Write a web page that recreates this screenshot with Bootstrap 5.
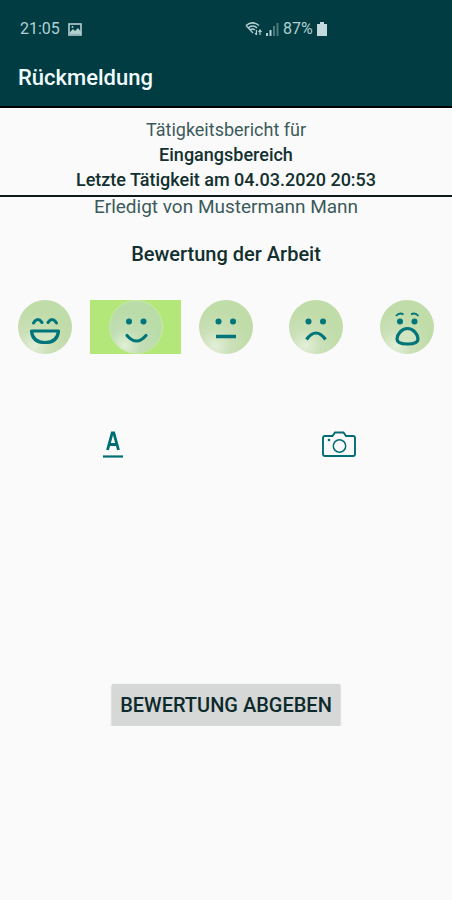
<!DOCTYPE html>
<html lang="de">
<head>
<meta charset="utf-8">
<meta name="viewport" content="width=device-width, initial-scale=1">
<title>Rückmeldung</title>
<link rel="stylesheet" href="https://cdn.jsdelivr.net/npm/bootstrap@5.3.0/dist/css/bootstrap.min.css">
<style>
body { background: #fafafa; color: #12302f; font-family: Roboto, "Liberation Sans", sans-serif; font-size: 18px; line-height: 25px; }
.app-header { background: #003c42; border-bottom: 2px solid #000; }
.status-bar { color: #b4cfd2; font-size: 16px; line-height: 24px; padding: 17px 20px 0; }
.status-bar > div { flex: 1 1 0; }
.status-right { padding-left: 38px; }
.app-title { color: #f0fbfc; font-size: 22px; line-height: 30px; font-weight: 500; padding: 22px 18px 13px; }
.report { border-bottom: 2px solid #101a1b; padding-top: 9px; padding-bottom: 3px; }
.report .intro, .done-by { color: #3c5a5b; }
.done-by { font-size: 19px; line-height: 20px; }
.fw-mid { font-weight: 500; }
.section-title { font-size: 20px; line-height: 26px; font-weight: 500; margin-top: 24px; }
.faces { margin-top: 33px; }
.face svg { width: 54px; height: 54px; display: block; }
.face { cursor: pointer; }
.btn-check:checked + .face { background: #b4e77a; }
.btn-check:focus-visible + .face { outline: 2px solid #00696c; }
.tools { margin-top: 69px; }
.tool-btn { line-height: 0; }
.submit-row { margin-top: 217px; }
.submit-btn { background: #d6d7d7; color: #0c2a2b; font-size: 20px; line-height: 26px; font-weight: 500; padding: 8px; box-shadow: 0 1px 2px rgba(0,0,0,.3); }
</style>
<script src="https://cdn.jsdelivr.net/npm/bootstrap@5.3.0/dist/js/bootstrap.bundle.min.js"></script>
</head>
<body>
<header class="app-header">
  <div class="status-bar d-flex">
    <div class="d-flex align-items-center gap-2">
      <span>21:05</span>
      <svg width="14" height="13" viewBox="0 0 14 13" aria-hidden="true"><rect x="1" y="1" width="12" height="11" fill="none" stroke="#b4cfd2" stroke-width="1.6"/><path d="M2 11V9l3-3 2 2 3-3 3 4v2z" fill="#b4cfd2"/><circle cx="4.500" cy="4" r="1" fill="#b4cfd2"/></svg>
    </div>
    <div class="status-right d-flex align-items-center gap-1">
      <svg width="17" height="16" viewBox="0 0 17 16" fill="none" stroke="#b4cfd2" aria-hidden="true"><path d="M1 4.500Q7.500-.8 14 4.500M3 7q4.500-4 9 0M5 9q2.500-2 5 0" stroke-width="1.600"/><path d="M1 4.500 8 12" stroke-width="1.200"/><path d="M11.500 9v5m-1.500-2 1.500 2M15 14V9m-1.500 2L15 9l1.500 2" stroke-width="1.200"/></svg>
      <svg width="13" height="14" viewBox="0 0 13 14" aria-hidden="true"><path d="M0 11h2v3H0zM3.500 8h2v6h-2z" fill="#b4cfd2"/><path d="M7 4h2v10H7zM10.500 1h2v13h-2z" fill="#4c777b"/></svg>
      <span>87%</span>
      <svg width="10" height="14" viewBox="0 0 10 14" aria-hidden="true"><path d="M3 0h4v2h3v12H0V2h3z" fill="#c5dadd"/></svg>
    </div>
  </div>
  <h1 class="app-title mb-0">Rückmeldung</h1>
</header>

<svg class="position-absolute" width="0" height="0" aria-hidden="true">
  <defs>
    <radialGradient id="ball" cx=".3" cy=".85" r=".65"><stop offset="0" stop-color="#e3efd9"/><stop offset=".45" stop-color="#cbe0b8"/><stop offset="1" stop-color="#c0dca9"/></radialGradient>
    <radialGradient id="ballOn" cx=".3" cy=".85" r=".65"><stop offset="0" stop-color="#e0f0d4"/><stop offset=".45" stop-color="#c3deb6"/><stop offset="1" stop-color="#b9dca9"/></radialGradient>
  </defs>
</svg>

<main class="text-center">
  <section class="report">
    <p class="intro mb-0">Tätigkeitsbericht für</p>
    <p class="fw-mid mb-0">Eingangsbereich</p>
    <p class="fw-mid mb-0">Letzte Tätigkeit am 04.03.2020 20:53</p>
  </section>
  <p class="done-by mb-0">Erledigt von Mustermann Mann</p>

  <h2 class="section-title mb-0">Bewertung der Arbeit</h2>
  <div class="faces row row-cols-5 g-0" role="radiogroup" aria-label="Bewertung der Arbeit">
    <div class="col">
      <input class="btn-check" type="radio" name="rating" id="rate1">
      <label class="face d-flex justify-content-center" for="rate1" aria-label="Sehr gut">
        <svg viewBox="0 0 54 54" fill="none" stroke="#00757a" stroke-width="3"><circle cx="27" cy="27" r="27" fill="url(#ball)" stroke="none"/><path d="M15.500 23q4-6.500 8.500-.5M30 22.500q4.500-6 8.500.5" stroke-linecap="round"/><path d="M13.500 31h27q-1 11.500-13.500 11.500t-13.500-11.500z" fill="#d3e6c3" stroke-linejoin="round" stroke-width="3.200"/></svg>
      </label>
    </div>
    <div class="col">
      <input class="btn-check" type="radio" name="rating" id="rate2" checked>
      <label class="face d-flex justify-content-center" for="rate2" aria-label="Gut">
        <svg viewBox="0 0 54 54" fill="none" stroke="#00757a" stroke-width="3.200"><circle cx="27" cy="27" r="26.500" fill="url(#ballOn)" stroke="#c8e9a7" stroke-width="1"/><circle cx="20" cy="21.500" r="3" fill="#00757a" stroke="none"/><circle cx="34.500" cy="21.500" r="3" fill="#00757a" stroke="none"/><path d="M18 35.500q9.500 11 19 0" stroke-linecap="round"/></svg>
      </label>
    </div>
    <div class="col">
      <input class="btn-check" type="radio" name="rating" id="rate3">
      <label class="face d-flex justify-content-center" for="rate3" aria-label="Neutral">
        <svg viewBox="0 0 54 54" fill="none"><circle cx="27" cy="27" r="27" fill="url(#ball)"/><circle cx="19.500" cy="21.500" r="3" fill="#00757a"/><circle cx="34" cy="21.500" r="3" fill="#00757a"/><path d="M17 36.500h20" stroke="#00757a" stroke-width="3.500"/></svg>
      </label>
    </div>
    <div class="col">
      <input class="btn-check" type="radio" name="rating" id="rate4">
      <label class="face d-flex justify-content-center" for="rate4" aria-label="Schlecht">
        <svg viewBox="0 0 54 54" fill="none"><circle cx="27" cy="27" r="27" fill="url(#ball)"/><circle cx="19.500" cy="21.500" r="3" fill="#00757a"/><circle cx="34" cy="21.500" r="3" fill="#00757a"/><path d="M17.500 39.500q9.500-13 19 0" stroke="#00757a" stroke-width="3.200"/></svg>
      </label>
    </div>
    <div class="col">
      <input class="btn-check" type="radio" name="rating" id="rate5">
      <label class="face d-flex justify-content-center" for="rate5" aria-label="Sehr schlecht">
        <svg viewBox="0 0 54 54" fill="none" stroke="#00757a"><circle cx="27" cy="27" r="27" fill="url(#ball)" stroke="none"/><circle cx="20" cy="21.500" r="3" fill="#00757a" stroke="none"/><circle cx="34.500" cy="21.500" r="3" fill="#00757a" stroke="none"/><path d="M16 16q3.500-4 7.500-1.500M31 14.500q4-2.500 7.500 1.500" stroke-width="1.800"/><path d="M27.500 28.500c6 0 10.500 6 10.500 10.500 0 3.500-4 5-10.500 5s-10.500-1.500-10.500-5c0-4.500 4.500-10.500 10.500-10.500z" fill="#d0e5c0" stroke-width="3.200"/></svg>
      </label>
    </div>
  </div>

  <div class="tools row row-cols-2 g-0">
    <div class="col">
      <button class="tool-btn btn p-2 border-0" type="button" aria-label="Text hinzufügen">
        <svg width="22" height="28" viewBox="0 0 22 28" fill="none" stroke="#006d74" aria-hidden="true"><path d="M5.500 19 10.200 2h1.600l4.700 17M7 13.500h8" stroke-width="2.800"/><path d="M1 25.500h20" stroke-width="2.200"/></svg>
      </button>
    </div>
    <div class="col">
      <button class="tool-btn btn p-2 border-0" type="button" aria-label="Foto hinzufügen">
        <svg width="34" height="28" viewBox="0 0 34 28" fill="none" stroke="#006d74" aria-hidden="true"><path d="M3 5h7.500l2.500-3.500h8.500L24 5h7q2 0 2 2v16q0 2-2 2H3q-2 0-2-2V7q0-2 2-2z" stroke-width="1.900"/><circle cx="17.500" cy="15" r="6.200" stroke-width="1.500"/><circle cx="7" cy="9" r="1.300" fill="#006d74" stroke="none"/></svg>
      </button>
    </div>
  </div>

  <div class="submit-row">
    <button class="submit-btn btn border-0 rounded-0" type="button">BEWERTUNG ABGEBEN</button>
  </div>
</main>
</body>
</html>
